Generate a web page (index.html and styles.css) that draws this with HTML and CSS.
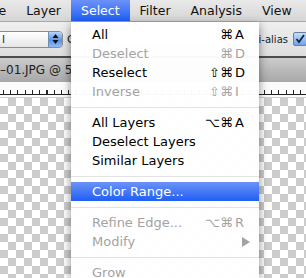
FILE: index.html
```html
<!DOCTYPE html>
<html lang="en">
<head>
  <meta charset="UTF-8">
  <title>Select Menu</title>
  <link rel="stylesheet" href="styles.css">
</head>
<body>

  <div class="menubar">
    <span class="menubar-item first">Image</span>
    <span class="menubar-item">Layer</span>
    <span class="menubar-item active">Select</span>
    <span class="menubar-item">Filter</span>
    <span class="menubar-item">Analysis</span>
    <span class="menubar-item">View</span>
  </div>

  <div class="options">
    <div class="popup">
      <span class="popup-label">l</span>
      <span class="stepper">
        <svg width="13" height="16" viewBox="0 0 13 16">
          <polygon points="3.5,7 9.5,7 6.5,3" fill="#111"/>
          <polygon points="3.5,9 9.5,9 6.5,13" fill="#111"/>
        </svg>
      </span>
    </div>
    <span class="opt-label">C</span>
    <span class="opt-label push">ti-alias</span>
    <span class="checkbox">
      <svg width="12" height="12" viewBox="0 0 12 12">
        <path d="M2.5 6 L5 9 L10 2" fill="none" stroke="#13224a" stroke-width="1.8"/>
      </svg>
    </span>
  </div>

  <div class="titlebar">&ndash;01.JPG @ 5</div>
  <div class="ruler"></div>
  <div class="canvas"></div>

  <!-- Select dropdown -->
  <div class="menu">
    <div class="menu-item"><span>All</span><span class="mods">&#8984;</span><span class="key">A</span></div>
    <div class="menu-item disabled"><span>Deselect</span><span class="mods">&#8984;</span><span class="key">D</span></div>
    <div class="menu-item"><span>Reselect</span><span class="mods">&#8679;&#8984;</span><span class="key">D</span></div>
    <div class="menu-item disabled"><span>Inverse</span><span class="mods">&#8679;&#8984;</span><span class="key">I</span></div>
    <div class="separator"></div>
    <div class="menu-item"><span>All Layers</span><span class="mods">&#8997;&#8984;</span><span class="key">A</span></div>
    <div class="menu-item"><span>Deselect Layers</span></div>
    <div class="menu-item"><span>Similar Layers</span></div>
    <div class="separator"></div>
    <div class="menu-item selected"><span>Color Range...</span></div>
    <div class="separator"></div>
    <div class="menu-item disabled"><span>Refine Edge...</span><span class="mods">&#8997;&#8984;</span><span class="key">R</span></div>
    <div class="menu-item disabled"><span>Modify</span><span class="mods"></span>
      <span class="key arrow">
        <svg width="8" height="10" viewBox="0 0 8 10"><polygon points="0,0 8,5 0,10" fill="#a3a3a3"/></svg>
      </span>
    </div>
    <div class="separator"></div>
    <div class="menu-item disabled"><span>Grow</span></div>
  </div>

</body>
</html>
```

FILE: styles.css
```css
html, body {
  margin: 0;
  width: 306px;
  height: 278px;
  overflow: hidden;
  font-family: 'DejaVu Sans', sans-serif;
}

body {
  position: relative;
  display: flex;
  flex-direction: column;
}

.menubar {
  height: 21px;
  display: flex;
  flex-shrink: 0;
  background: linear-gradient(#e9e9e9, #d6d6d6);
  border-bottom: 1px solid #a9a9a9;
  font-size: 12.5px;
  color: #111;
  white-space: nowrap;
}

.menubar-item {
  padding: 0 10px;
  line-height: 21px;
}

.menubar-item.first {
  margin-left: -43px;
}

.menubar-item.active {
  background: linear-gradient(#6c92f7, #1f5ff5);
  color: #fff;
}

.options {
  height: 34px;
  flex-shrink: 0;
  display: flex;
  align-items: center;
  background: linear-gradient(#efefef, #dedede);
  border-bottom: 2px solid #4b4b4b;
  font-size: 10px;
  color: #222;
  white-space: nowrap;
}

.popup {
  margin-left: -10px;
  width: 73px;
  height: 17px;
  box-sizing: border-box;
  display: flex;
  align-items: center;
  justify-content: space-between;
  border: 1px solid #8c8c8c;
  border-radius: 4px;
  background: linear-gradient(#ffffff, #e6e6e6);
  overflow: hidden;
}

.popup-label {
  padding-left: 11px;
  font-size: 11px;
}

.stepper {
  width: 13px;
  height: 100%;
  display: flex;
  align-items: center;
  background: linear-gradient(#b9d4f6, #5b94e6 55%, #8fbcf2);
  border-left: 1px solid #6f8fb9;
}

.opt-label {
  margin-left: 4px;
  font-size: 11px;
}

.opt-label.push {
  margin-left: auto;
  font-size: 10px;
}

.checkbox {
  width: 12px;
  height: 12px;
  margin-left: 5px;
  margin-right: -1px;
  display: flex;
  border: 1px solid #6a7f9e;
  border-radius: 2px;
  background: linear-gradient(#c7dcf7, #6fa2e8);
}

.titlebar {
  height: 24px;
  flex-shrink: 0;
  line-height: 24px;
  background: linear-gradient(#cbcbcb, #a8a8a8);
  font-size: 12px;
  color: #1e1e1e;
  white-space: nowrap;
}

.ruler {
  height: 15px;
  flex-shrink: 0;
  background-color: #fbfbfb;
  background-image:
    linear-gradient(#222, #222),
    repeating-linear-gradient(90deg, #222 0 1px, transparent 1px 7.25px);
  background-size: 100% 1px, 100% 4px;
  background-position: 0 12px, 3px 8px;
  background-repeat: no-repeat;
  border-bottom: 1px solid #cfcfcf;
}

.canvas {
  flex: 1;
  background-color: #fff;
  background-image: conic-gradient(#cccccc 25%, #ffffff 0 50%, #cccccc 0 75%, #ffffff 0);
  background-size: 16px 16px;
}

.menu {
  position: absolute;
  left: 71px;
  top: 22px;
  width: 188px;
  height: 256px;
  box-sizing: border-box;
  padding-top: 3px;
  overflow: hidden;
  background: rgba(255, 255, 255, 0.97);
  box-shadow: 0 3px 9px rgba(0, 0, 0, 0.45);
  font-size: 13px;
  color: #000;
}

.menu-item {
  height: 19px;
  line-height: 19px;
  display: grid;
  grid-template-columns: 1fr auto 14px;
  padding: 0 11px 0 21px;
  white-space: nowrap;
}

.menu-item .mods {
  text-align: right;
  padding-right: 1px;
}

.menu-item .key {
  padding-left: 1px;
}

.menu-item .arrow {
  display: flex;
  align-items: center;
  justify-content: flex-end;
  margin-right: -2px;
}

.menu-item.disabled {
  color: #a3a3a3;
}

.menu-item.selected {
  background: linear-gradient(#6c92f7, #1f5ff5);
  color: #fff;
}

.separator {
  height: 1px;
  margin: 6px 0 5px;
  background: #e3e3e3;
}
```
